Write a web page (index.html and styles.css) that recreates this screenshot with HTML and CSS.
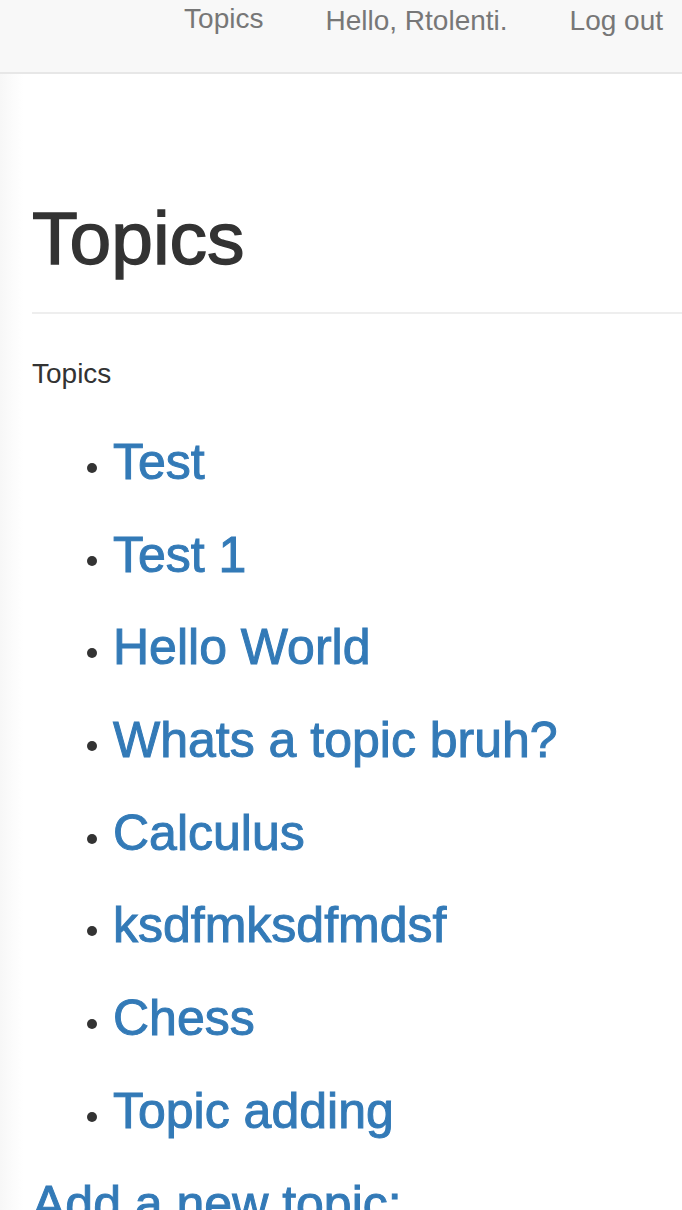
FILE: index.html
```html
<!DOCTYPE html>
<html lang="en">
<head>
<meta charset="utf-8">
<title>Topics</title>
<link rel="stylesheet" href="styles.css">
</head>
<body>
<nav class="navbar">
  <a class="nav-link nav-topics" href="#">Topics</a>
  <span class="nav-link nav-text">Hello, Rtolenti.</span>
  <a class="nav-link nav-text" href="#">Log out</a>
</nav>
<main class="container">
  <div class="page-header">
    <h1 class="title">Topics</h1>
  </div>
  <p class="label">Topics</p>
  <ul class="topic-list">
    <li><a class="topic" href="#">Test</a></li>
    <li><a class="topic" href="#">Test 1</a></li>
    <li><a class="topic" href="#">Hello World</a></li>
    <li><a class="topic" href="#">Whats a topic bruh?</a></li>
    <li><a class="topic" href="#">Calculus</a></li>
    <li><a class="topic" href="#">ksdfmksdfmdsf</a></li>
    <li><a class="topic" href="#">Chess</a></li>
    <li><a class="topic" href="#">Topic adding</a></li>
  </ul>
  <h3 class="add-title"><a href="#">Add a new topic:</a></h3>
</main>
</body>
</html>
```
FILE: styles.css
```css
html, body {
  margin: 0;
  padding: 0;
}
body {
  font-family: "Liberation Sans", Helvetica, Arial, sans-serif;
  color: #333;
  background: linear-gradient(to right, #f7f7f7 0, #fcfcfc 14px, #fff 24px);
  min-height: 1210px;
}
a {
  text-decoration: none;
}
.navbar {
  height: 72px;
  background: #f8f8f8;
  border-bottom: 2px solid #e7e7e7;
  display: flex;
  justify-content: flex-end;
  align-items: flex-start;
  gap: 62px;
  padding-right: 19px;
}
.nav-link {
  font-size: 28px;
  line-height: 40px;
  color: #777;
}
.nav-topics {
  margin-top: -1px;
}
.nav-text {
  margin-top: 1px;
}
.container {
  padding-left: 32px;
}
.page-header {
  border-bottom: 2px solid #eee;
  padding-bottom: 34px;
  margin-top: 124px;
}
.title {
  margin: 0;
  font-size: 75px;
  line-height: 80px;
  font-weight: 500;
  color: #333;
  -webkit-text-stroke: 1.4px #333;
}
.label {
  margin: 40px 0 0;
  font-size: 28px;
  line-height: 40px;
}
.topic-list {
  margin: 40px 0 0;
  padding-left: 81px;
  list-style: none;
}
.topic-list li {
  display: flex;
  align-items: flex-start;
  margin-left: -26px;
  margin-bottom: 36.7px;
}
.topic-list li::before {
  content: "";
  flex: none;
  width: 10px;
  height: 10px;
  border-radius: 50%;
  background: #333;
  margin-top: 29px;
  margin-right: 16px;
}
.topic {
  display: block;
  font-size: 50px;
  line-height: 56px;
  color: #337ab7;
  -webkit-text-stroke: 1px #337ab7;
}
.add-title {
  margin: 0;
  font-size: 50px;
  line-height: 56px;
  font-weight: 500;
}
.add-title a {
  color: #337ab7;
  -webkit-text-stroke: 1px #337ab7;
}
```
